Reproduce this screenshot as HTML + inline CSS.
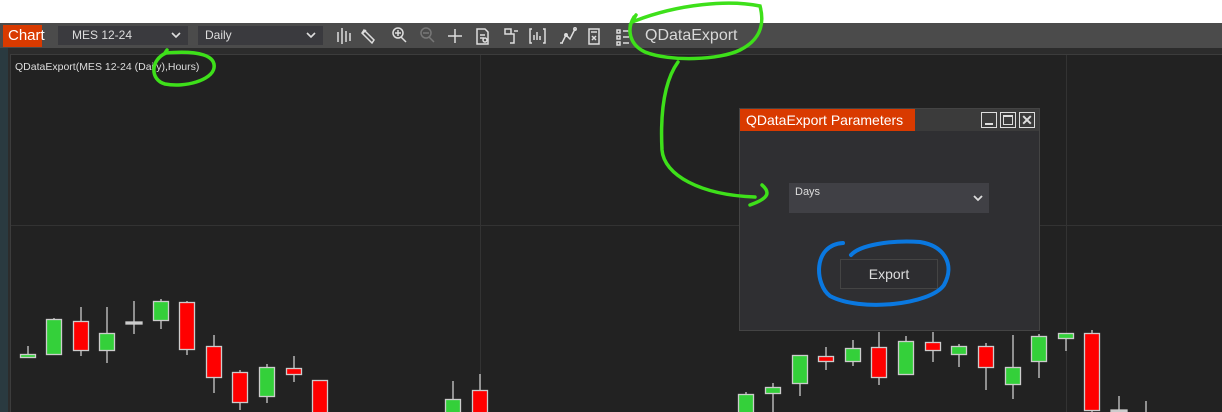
<!DOCTYPE html>
<html><head><meta charset="utf-8"><style>
*{margin:0;padding:0;box-sizing:border-box}
body{width:1222px;height:412px;overflow:hidden;background:#fff;font-family:"Liberation Sans",sans-serif;position:relative}
.a{position:absolute}
.chev{position:absolute;right:7px;top:6px}
</style></head><body>
<div class="a" style="left:0;top:23px;width:1222px;height:389px;background:#2c2c2c"></div>
<div class="a" style="left:0;top:23px;width:8px;height:389px;background:#2a3a40"></div>
<div class="a" style="left:0;top:23px;width:1222px;height:25px;background:#4b4b4b"></div>
<div class="a" style="left:3px;top:25px;width:39px;height:22px;background:#d93a00;color:#fff;font-size:15px;line-height:22px;padding-left:5px">Chart</div>
<div class="a" style="left:58px;top:26px;width:130px;height:19px;background:#3a3a3e;color:#ddd;font-size:12px;line-height:19px;padding-left:14px">MES 12-24<svg class="chev" width="10" height="7"><path d="M1 1l4 4l4-4" stroke="#ddd" stroke-width="1.6" fill="none"/></svg></div>
<div class="a" style="left:198px;top:26px;width:125px;height:19px;background:#3a3a3e;color:#ddd;font-size:12px;line-height:19px;padding-left:7px">Daily<svg class="chev" width="10" height="7"><path d="M1 1l4 4l4-4" stroke="#ddd" stroke-width="1.6" fill="none"/></svg></div>
<svg class="a" style="left:330px;top:24px" width="300" height="24" fill="none" stroke="#ddd" stroke-width="1.5">
<path d="M8 8v10M12 4v16M16 7v11M20 9v8"/>
<path d="M34 6l10 10l-2 3l-10-10z M36 6l-3 3"/>
<circle cx="68" cy="9" r="5"/><path d="M71 13l5 5M65 9h6M68 6v6"/>
<circle cx="96" cy="9" r="5" stroke="#777"/><path d="M99 13l5 5M93 9h6" stroke="#777"/>
<path d="M118 12h14M125 5v14"/>
<path d="M147 5h8l3 3v12h-11z M150 11h5M150 14h4"/><circle cx="155" cy="16" r="2"/>
<path d="M175 5h6v5h-6z M179 10h5v9h-4M184 7h4"/>
<path d="M202 5h-2v14h2M213 5h2v14h-2M204 16v-5M207 16v-8M210 16v-4"/>
<path d="M232 19l4-8l4 4l5-10M230 19h3"/><circle cx="236" cy="11" r="1.2"/><circle cx="245" cy="5" r="1.2"/>
<path d="M259 5h10v15h-10z M261 8h6M262 12l4 4M266 12l-4 4"/>
<path d="M287 6h3v3h-3zM287 12h3v3h-3zM287 18h3v3h-3zM293 7h6M293 13h6M293 19h6"/>
</svg>
<div class="a" style="left:645px;top:26px;color:#d8d8d8;font-size:16px;line-height:20px">QDataExport</div>
<div class="a" style="left:10px;top:54px;width:1212px;height:358px;background:#222;border-top:1px solid #3c3c3c;border-left:1px solid #3c3c3c"></div>
<div class="a" style="left:480px;top:55px;width:1px;height:357px;background:#333"></div>
<div class="a" style="left:1066px;top:55px;width:1px;height:357px;background:#333"></div>
<div class="a" style="left:11px;top:225px;width:1211px;height:1px;background:#333"></div>
<div class="a" style="left:15px;top:61px;color:#ddd;font-size:10.5px">QDataExport(MES 12-24 (Daily),Hours)</div>
<svg class="a" style="left:0;top:0" width="1222" height="412" stroke="#ccc" stroke-width="1.3">
<line x1="28" y1="346" x2="28" y2="358"/><rect x="20.5" y="354.5" width="15" height="3" fill="#34d03a"/>
<line x1="54" y1="318" x2="54" y2="354"/><rect x="46.5" y="319.5" width="15" height="35" fill="#34d03a"/>
<line x1="81" y1="307" x2="81" y2="356"/><rect x="73.5" y="321.5" width="15" height="29" fill="#f00"/>
<line x1="107" y1="307" x2="107" y2="363"/><rect x="99.5" y="333.5" width="15" height="17" fill="#34d03a"/>
<line x1="134" y1="301" x2="134" y2="334"/><rect x="126" y="322" width="16" height="2" fill="#ccc"/>
<line x1="161" y1="299" x2="161" y2="329"/><rect x="153.5" y="301.5" width="15" height="19" fill="#34d03a"/>
<line x1="187" y1="301" x2="187" y2="355"/><rect x="179.5" y="302.5" width="15" height="47" fill="#f00"/>
<line x1="214" y1="335" x2="214" y2="393"/><rect x="206.5" y="346.5" width="15" height="31" fill="#f00"/>
<line x1="240" y1="370" x2="240" y2="410"/><rect x="232.5" y="372.5" width="15" height="30" fill="#f00"/>
<line x1="267" y1="364" x2="267" y2="403"/><rect x="259.5" y="367.5" width="15" height="29" fill="#34d03a"/>
<line x1="294" y1="356" x2="294" y2="382"/><rect x="286.5" y="368.5" width="15" height="6" fill="#f00"/>
<rect x="312.5" y="380.5" width="15" height="33" fill="#f00"/>
<line x1="453" y1="381" x2="453" y2="400"/><rect x="445.5" y="399.5" width="15" height="14" fill="#34d03a"/>
<line x1="480" y1="374" x2="480" y2="391"/><rect x="472.5" y="390.5" width="15" height="23" fill="#f00"/>
<line x1="746" y1="392" x2="746" y2="395"/><rect x="738.5" y="394.5" width="15" height="19" fill="#34d03a"/>
<line x1="773" y1="383" x2="773" y2="412"/><rect x="765.5" y="387.5" width="15" height="6" fill="#34d03a"/>
<line x1="800" y1="383" x2="800" y2="396"/><rect x="792.5" y="355.5" width="15" height="28" fill="#34d03a"/>
<line x1="826" y1="347" x2="826" y2="370"/><rect x="818.5" y="356.5" width="15" height="5" fill="#f00"/>
<line x1="853" y1="340" x2="853" y2="366"/><rect x="845.5" y="348.5" width="15" height="13" fill="#34d03a"/>
<line x1="879" y1="332" x2="879" y2="385"/><rect x="871.5" y="347.5" width="15" height="30" fill="#f00"/>
<line x1="906" y1="336" x2="906" y2="342"/><rect x="898.5" y="341.5" width="15" height="33" fill="#34d03a"/>
<line x1="933" y1="332" x2="933" y2="362"/><rect x="925.5" y="342.5" width="15" height="8" fill="#f00"/>
<line x1="959" y1="344" x2="959" y2="367"/><rect x="951.5" y="346.5" width="15" height="8" fill="#34d03a"/>
<line x1="986" y1="343" x2="986" y2="390"/><rect x="978.5" y="346.5" width="15" height="21" fill="#f00"/>
<line x1="1013" y1="335" x2="1013" y2="399"/><rect x="1005.5" y="367.5" width="15" height="17" fill="#34d03a"/>
<line x1="1039" y1="334" x2="1039" y2="378"/><rect x="1031.5" y="336.5" width="15" height="25" fill="#34d03a"/>
<line x1="1066" y1="338" x2="1066" y2="351"/><rect x="1058.5" y="333.5" width="15" height="5" fill="#34d03a"/>
<line x1="1092" y1="330" x2="1092" y2="412"/><rect x="1084.5" y="333.5" width="15" height="77" fill="#f00"/>
<line x1="1119" y1="396" x2="1119" y2="412"/><rect x="1111" y="410" width="16" height="2" fill="#ccc"/>
<line x1="1146" y1="401" x2="1146" y2="412"/>
</svg>
<div class="a" style="left:739px;top:108px;width:301px;height:223px;background:#2f2f32;border:1px solid #444"></div>
<div class="a" style="left:740px;top:109px;width:299px;height:22px;background:#3b3b3b"></div>
<div class="a" style="left:740px;top:109px;width:175px;height:22px;background:#d93a00;color:#fff;font-size:14px;line-height:22px;padding-left:6px">QDataExport Parameters</div>
<div class="a" style="left:981px;top:112px;width:16px;height:16px;border:1px solid #ddd"><div class="a" style="left:3px;top:10px;width:8px;height:2px;background:#ddd"></div></div>
<div class="a" style="left:1000px;top:112px;width:16px;height:16px;border:1px solid #ddd"><div class="a" style="left:2px;top:2px;width:10px;height:10px;border:1px solid #ddd;border-top-width:2px"></div></div>
<div class="a" style="left:1019px;top:112px;width:16px;height:16px;border:1px solid #ddd;color:#ddd;font-size:14px;font-weight:bold;line-height:14px;text-align:center">✕</div>
<div class="a" style="left:789px;top:183px;width:200px;height:30px;background:#404045;color:#ddd;font-size:11px;padding:3px 6px">Days<svg class="a" style="right:6px;top:12px" width="10" height="7"><path d="M1 1l4 4l4-4" stroke="#ddd" stroke-width="1.8" fill="none"/></svg></div>
<div class="a" style="left:840px;top:259px;width:98px;height:30px;border:1px solid #444;background:#2d2d30;color:#ddd;font-size:14px;line-height:28px;text-align:center">Export</div>
<svg class="a" style="left:0;top:0" width="1222" height="412" fill="none" stroke-linecap="round">
<g stroke="#3ee01a" stroke-width="3.5">
<path d="M166 53 C150 60 150 80 165 84 C185 88 212 80 214 68 C216 56 200 50 165 53 L167 50"/>
<path d="M634 17 C626 30 630 45 645 52 C670 62 720 60 740 50 C760 40 765 25 760 6 C730 0 680 3 632 22 L636 15"/>
<path d="M678 62 C665 80 660 110 662 150 C664 175 700 195 755 197 M762 185 C770 192 770 198 750 205"/>
</g>
<path d="M843 243 C812 245 815 285 830 296 C860 312 930 305 944 285 C955 265 945 246 920 242 C890 240 860 245 851 255" stroke="#0a78e0" stroke-width="4"/>
</svg>
</body></html>
